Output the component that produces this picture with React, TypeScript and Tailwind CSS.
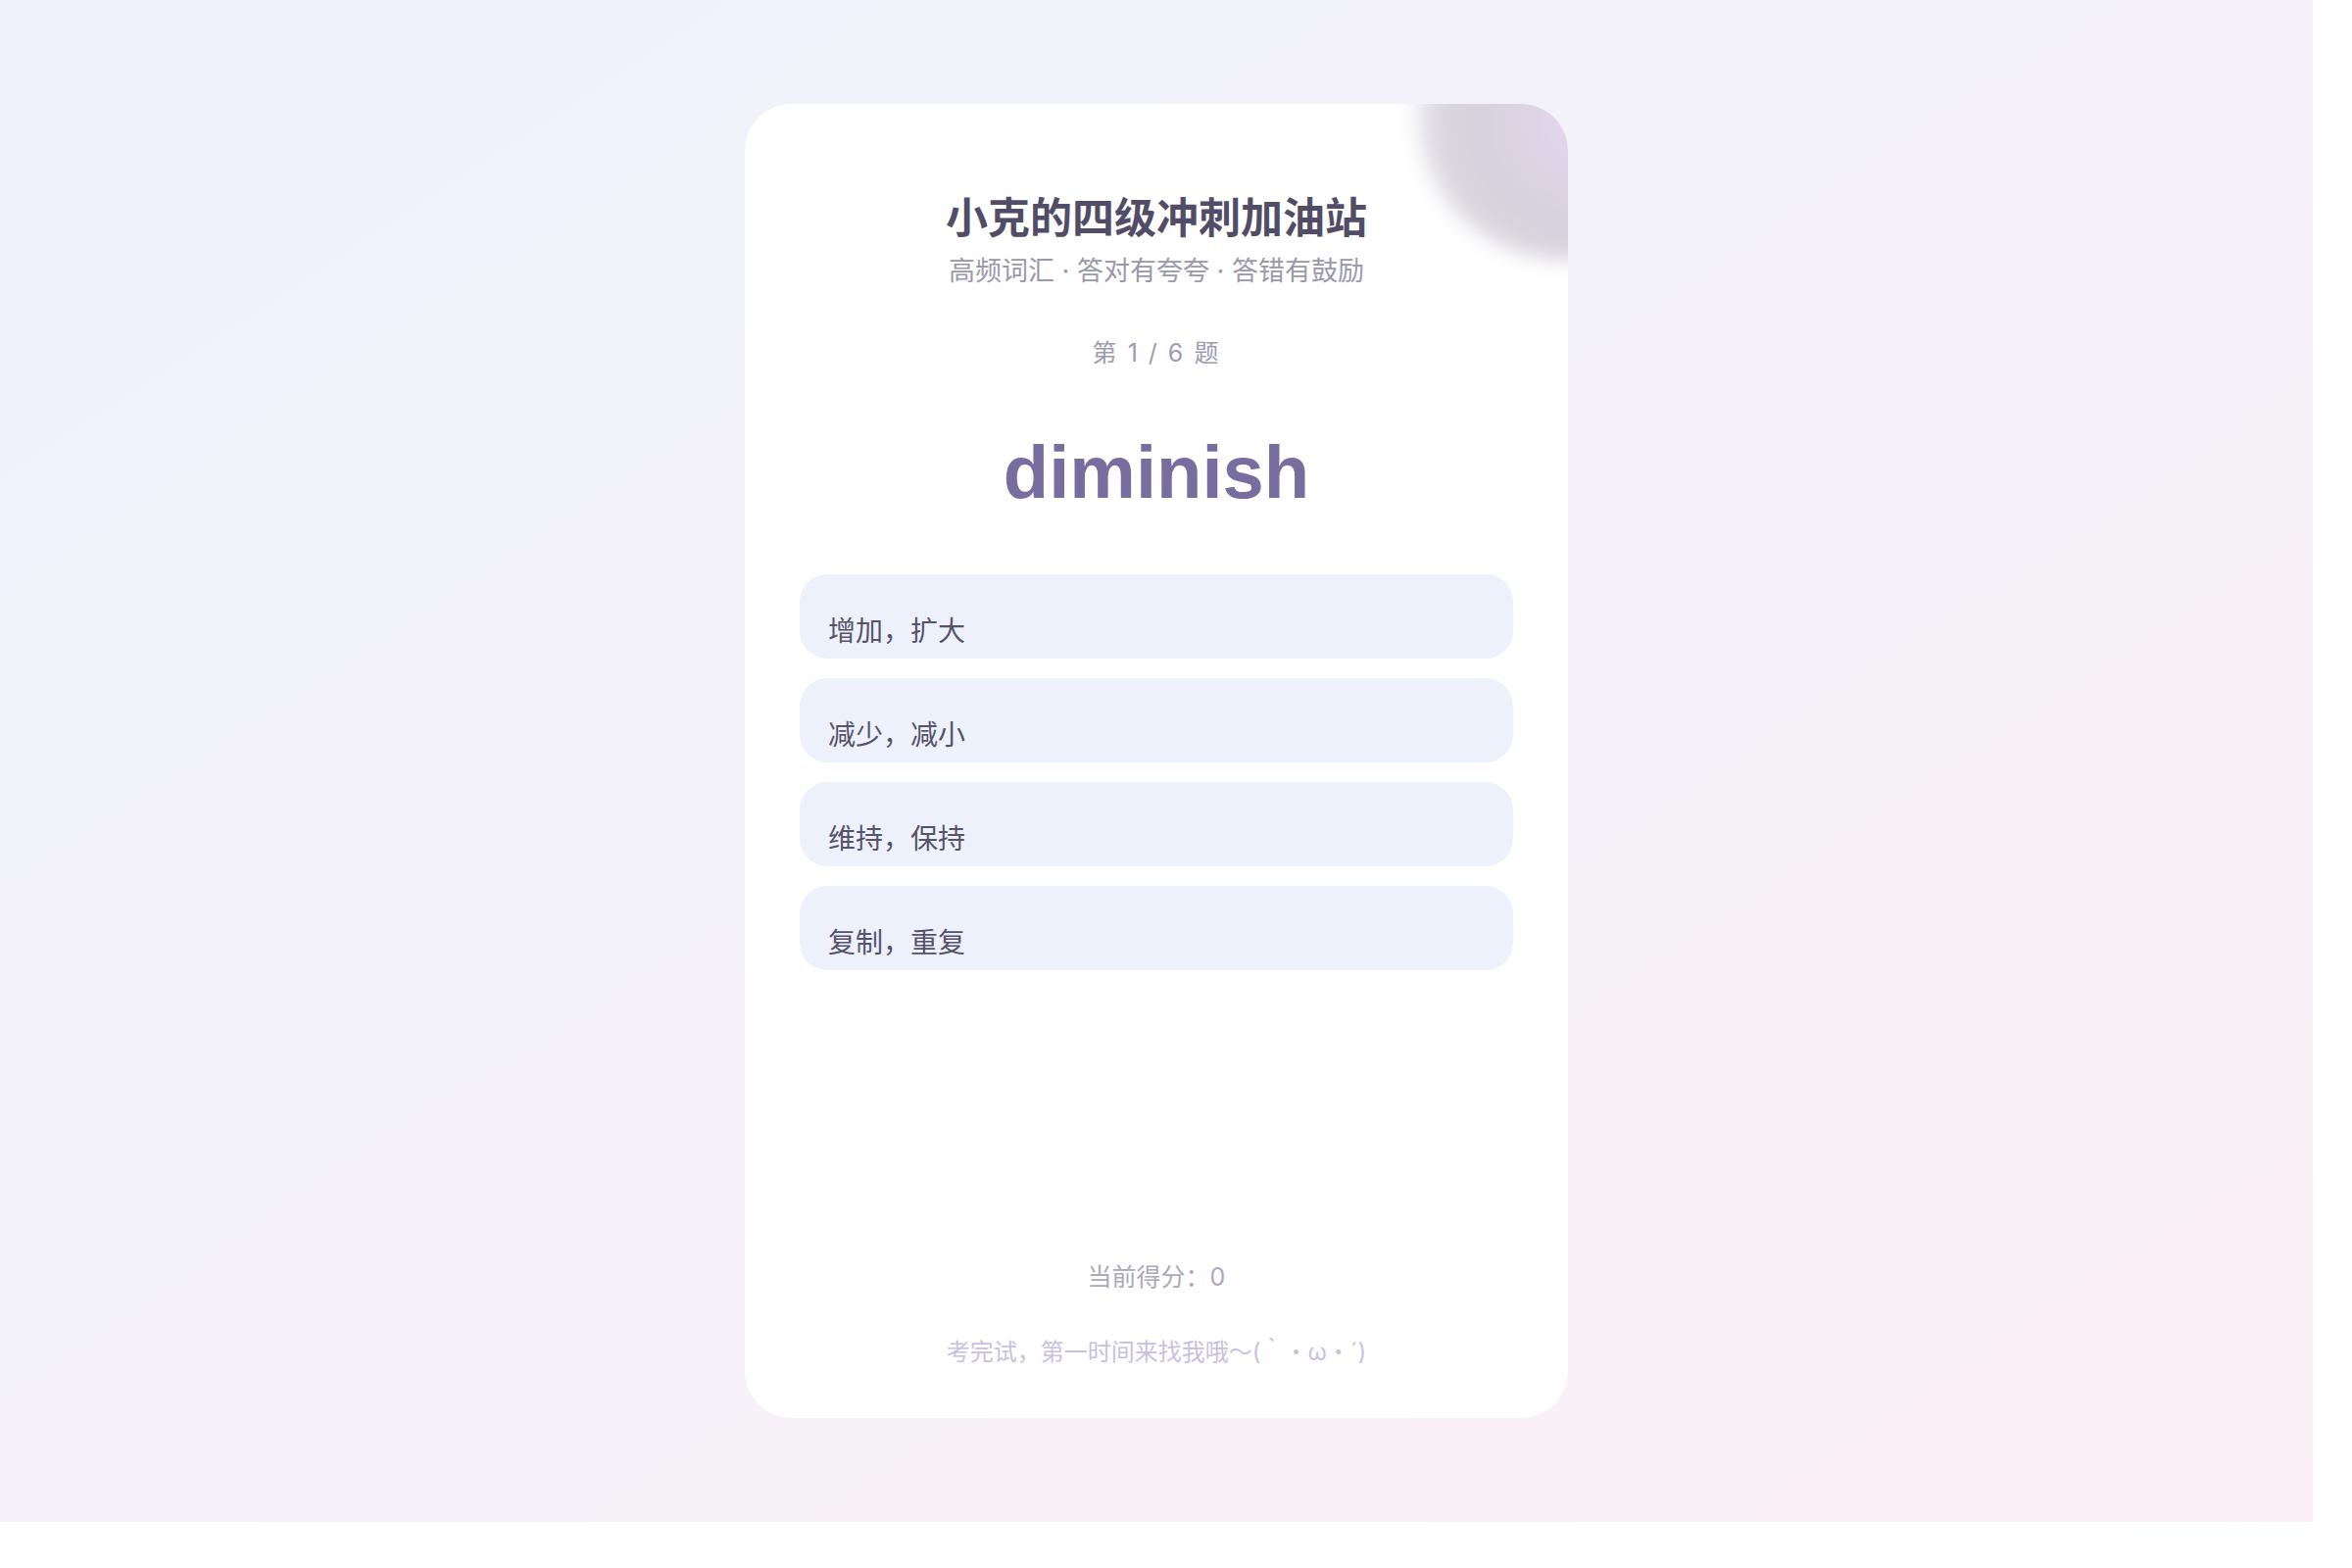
import React from 'react'

const options = ['增加，扩大', '减少，减小', '维持，保持', '复制，重复']

const cjk = "font-['Inter','Noto_Sans_CJK_SC',sans-serif]"

export default function App() {
  return (
    <div className={`w-[2360px] bg-linear-to-br from-[#eef1fb] via-[#f5f2f9] to-[#fcf0f6] py-[106px] ${cjk}`}>
      <div className="relative mx-auto flex h-[1341px] w-[840px] flex-col items-center overflow-hidden rounded-[48px] bg-white">
        {/* soft blob in the corner */}
        <div className="pointer-events-none absolute -right-[160px] -top-[160px] h-[320px] w-[320px] rounded-full bg-[radial-gradient(circle_at_55%_55%,#e6d7f0_0%,#d6d1dc_45%,#dcd9e0_62%,rgba(255,255,255,0)_72%)] blur-[10px]" />

        <h1 className="relative pt-[86px] text-[43px] font-bold leading-[60px] text-[#524d67]">
          小克的四级冲刺加油站
        </h1>
        <p className="mt-[6px] text-[27px] leading-[38px] text-[#9a98aa]">
          高频词汇 · 答对有夸夸 · 答错有鼓励
        </p>
        <p className="mt-[46px] text-[25px] leading-[36px] tracking-[2px] text-[#9d9bb0]">
          第 1 / 6 题
        </p>
        <div className="mt-[62px] font-['Liberation_Sans',Arial,sans-serif] text-[76px] font-bold leading-[84px] text-[#786d9f]">
          diminish
        </div>

        <div className="mt-[62px] flex w-full flex-col gap-[20px] px-[56px]">
          {options.map((o) => (
            <button
              key={o}
              className="flex h-[86px] w-full items-end rounded-[28px] bg-[#edf1fb] px-[29px] pb-[8px] text-left text-[28px] leading-[40px] text-[#55526a]"
            >
              {o}
            </button>
          ))}
        </div>

        <p className="mt-auto text-[25px] leading-[36px] text-[#aaa8b9]">当前得分：0</p>
        <p className="mt-[42px] pb-[50px] text-[24px] leading-[34px] text-[#c9bfe0]">
          考完试，第一时间来找我哦～(｀・ω・´)
        </p>
      </div>
    </div>
  )
}
